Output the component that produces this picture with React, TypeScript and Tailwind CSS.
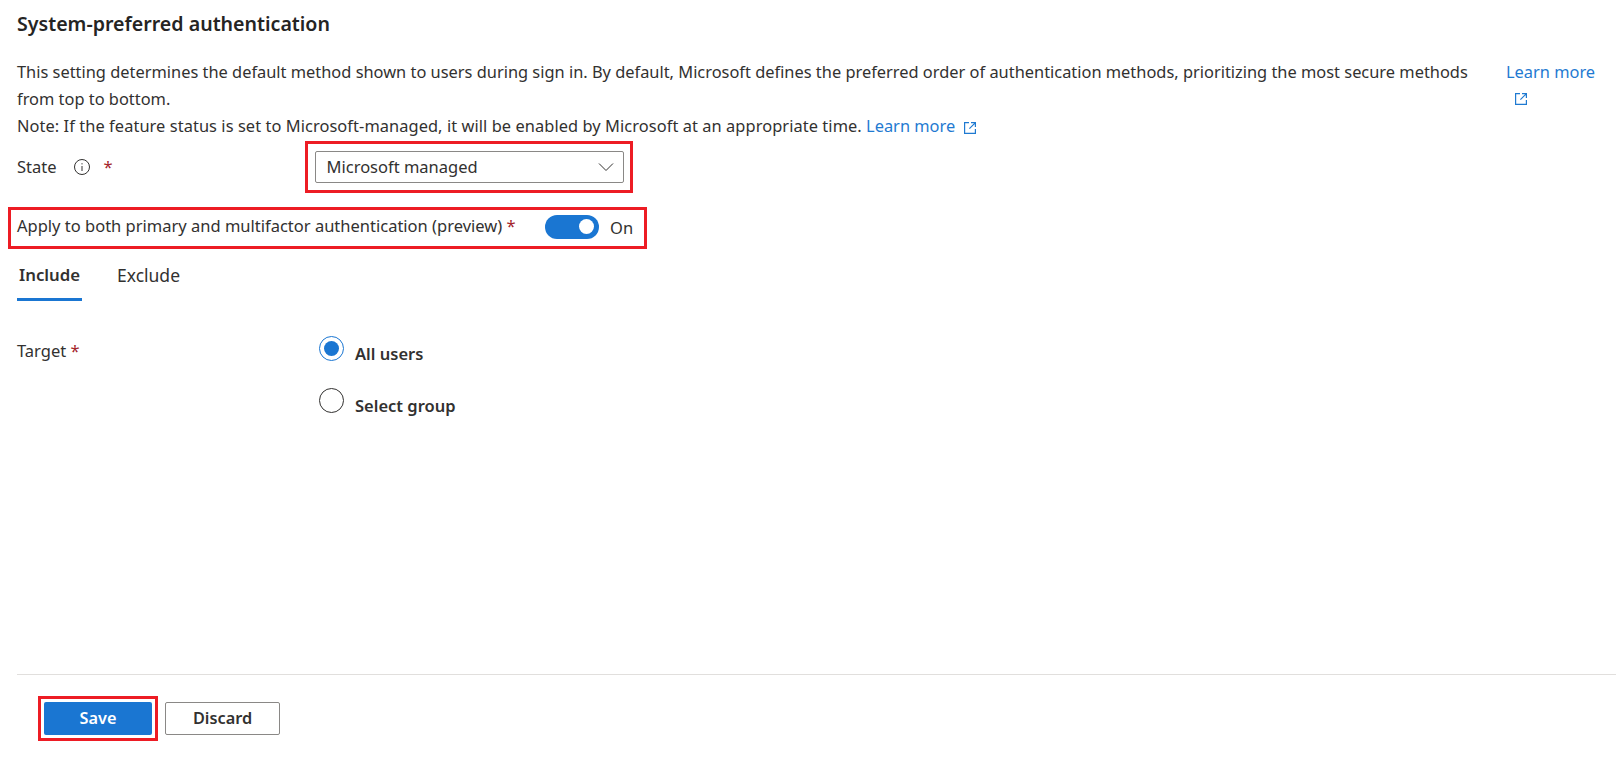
const font = "font-['Noto_Sans',sans-serif]";

function ExternalLink() {
    return (
        <svg width="14" height="14" viewBox="0 0 14 14" fill="none" stroke="#1f7ad1" strokeWidth="1.2" className="inline-block">
            <path d="M6 1.6H1.6v10.8h10.8V8" />
            <path d="M8 1.6h4.4V6M12.2 1.8 6.4 7.6" />
        </svg>
    );
}

function Star() {
    return <span className="text-[#a4262c]">*</span>;
}

function Radio({ checked, label }: { checked?: boolean; label: string }) {
    return (
        <div className="flex items-start gap-[11px]">
            {checked ? (
                <span className="flex h-[25px] w-[25px] items-center justify-center rounded-full border border-[#1a76d2] bg-white">
                    <span className="h-[15px] w-[15px] rounded-full bg-[#1a76d2]" />
                </span>
            ) : (
                <span className="h-[25px] w-[25px] rounded-full border border-[#323130] bg-white" />
            )}
            <span className="mt-[6px] text-[16.5px] leading-[24px] font-semibold text-[#323130]">{label}</span>
        </div>
    );
}

export default function App() {
    return (
        <div className={`${font} h-[757px] w-[1616px] overflow-hidden bg-white text-[16.5px] text-[#323130]`}>
            <div className="pt-[12px] pl-[17px]">
                <h2 className="text-[19.6px] leading-[24px] font-semibold text-[#252423]">System-preferred authentication</h2>

                <div className="mt-[22px] flex text-[16.4px] leading-[27px]">
                    <p className="w-[1489px] shrink-0">
                        This setting determines the default method shown to users during sign in. By default, Microsoft defines the preferred order of authentication methods, prioritizing the most secure methods
                        <br />
                        from top to bottom.
                        <br />
                        <span className="tracking-[0.07px]">Note: If the feature status is set to Microsoft-managed, it will be enabled by Microsoft at an appropriate time.</span>{" "}
                        <a className="mr-[4px] text-[#1f7ad1]">Learn more</a> <ExternalLink />
                    </p>
                    <div className="w-[95px] text-[#1f7ad1]">
                        Learn more
                        <div className="-mt-[2px] pl-[8px]">
                            <ExternalLink />
                        </div>
                    </div>
                </div>

                <div className="mt-[2px] flex h-[52px] items-center">
                    <div className="flex w-[288px] items-center">
                        <span>State</span>
                        <svg width="18" height="18" viewBox="0 0 18 18" fill="none" stroke="#323130" strokeWidth="1" className="ml-[16px]">
                            <circle cx="9" cy="9" r="7.5" />
                            <path d="M9 8v5M9 5.2v1.2" />
                        </svg>
                        <span className="ml-[13px]">
                            <Star />
                        </span>
                    </div>
                    <div className="flex h-[52px] w-[328px] items-center justify-center border-[3px] border-[#ed1c24]">
                        <div className="flex h-[32px] w-[309px] items-center justify-between rounded-[2px] border border-[#8a8886] pr-[9px] pl-[11px]">
                            <span>Microsoft managed</span>
                            <svg width="16" height="10" viewBox="0 0 16 10" fill="none" stroke="#323130" strokeWidth="1">
                                <path d="M1 1.5 8 8.5 15 1.5" />
                            </svg>
                        </div>
                    </div>
                </div>

                <div className="mt-[14px] -ml-[9px] flex h-[42px] w-[639px] items-center border-[3px] border-[#ed1c24] pl-[6px]">
                    <span className="-mt-[3px] w-[528px] shrink-0">
                        Apply to both primary and multifactor authentication (preview) <Star />
                    </span>
                    <span className="-mt-[3px] flex h-[24px] w-[54px] items-center justify-end rounded-full bg-[#1a76d2] pr-[5px]">
                        <span className="h-[15px] w-[15px] rounded-full bg-white" />
                    </span>
                    <span className="ml-[11px]">On</span>
                </div>

                <div className="mt-[13px] flex h-[39px]">
                    <div className="w-[65px] border-b-[3px] border-[#1a76d2] pl-[2px] text-[16.8px] leading-[26px] font-semibold">Include</div>
                    <div className="ml-[35px] text-[17.5px] leading-[26px]">Exclude</div>
                </div>

                <div className="mt-[35px] flex">
                    <div className="mt-[3px] w-[302px] leading-[24px]">
                        Target <Star />
                    </div>
                    <div className="flex flex-col gap-[22px]">
                        <Radio checked label="All users" />
                        <Radio label="Select group" />
                    </div>
                </div>
            </div>

            <div className="mt-[256px] ml-[17px] border-t border-[#e1dfdd]">
                <div className="mt-[21px] flex items-center pl-[21px]">
                    <div className="border-[3px] border-[#ed1c24] p-[3px]">
                        <button className="h-[33px] w-[108px] rounded-[2px] bg-[#1a76d2] text-[16.3px] font-semibold text-white">Save</button>
                    </div>
                    <button className="ml-[7px] h-[33px] w-[115px] rounded-[2px] border border-[#8a8886] text-[16.3px] font-semibold">Discard</button>
                </div>
            </div>
        </div>
    );
}
